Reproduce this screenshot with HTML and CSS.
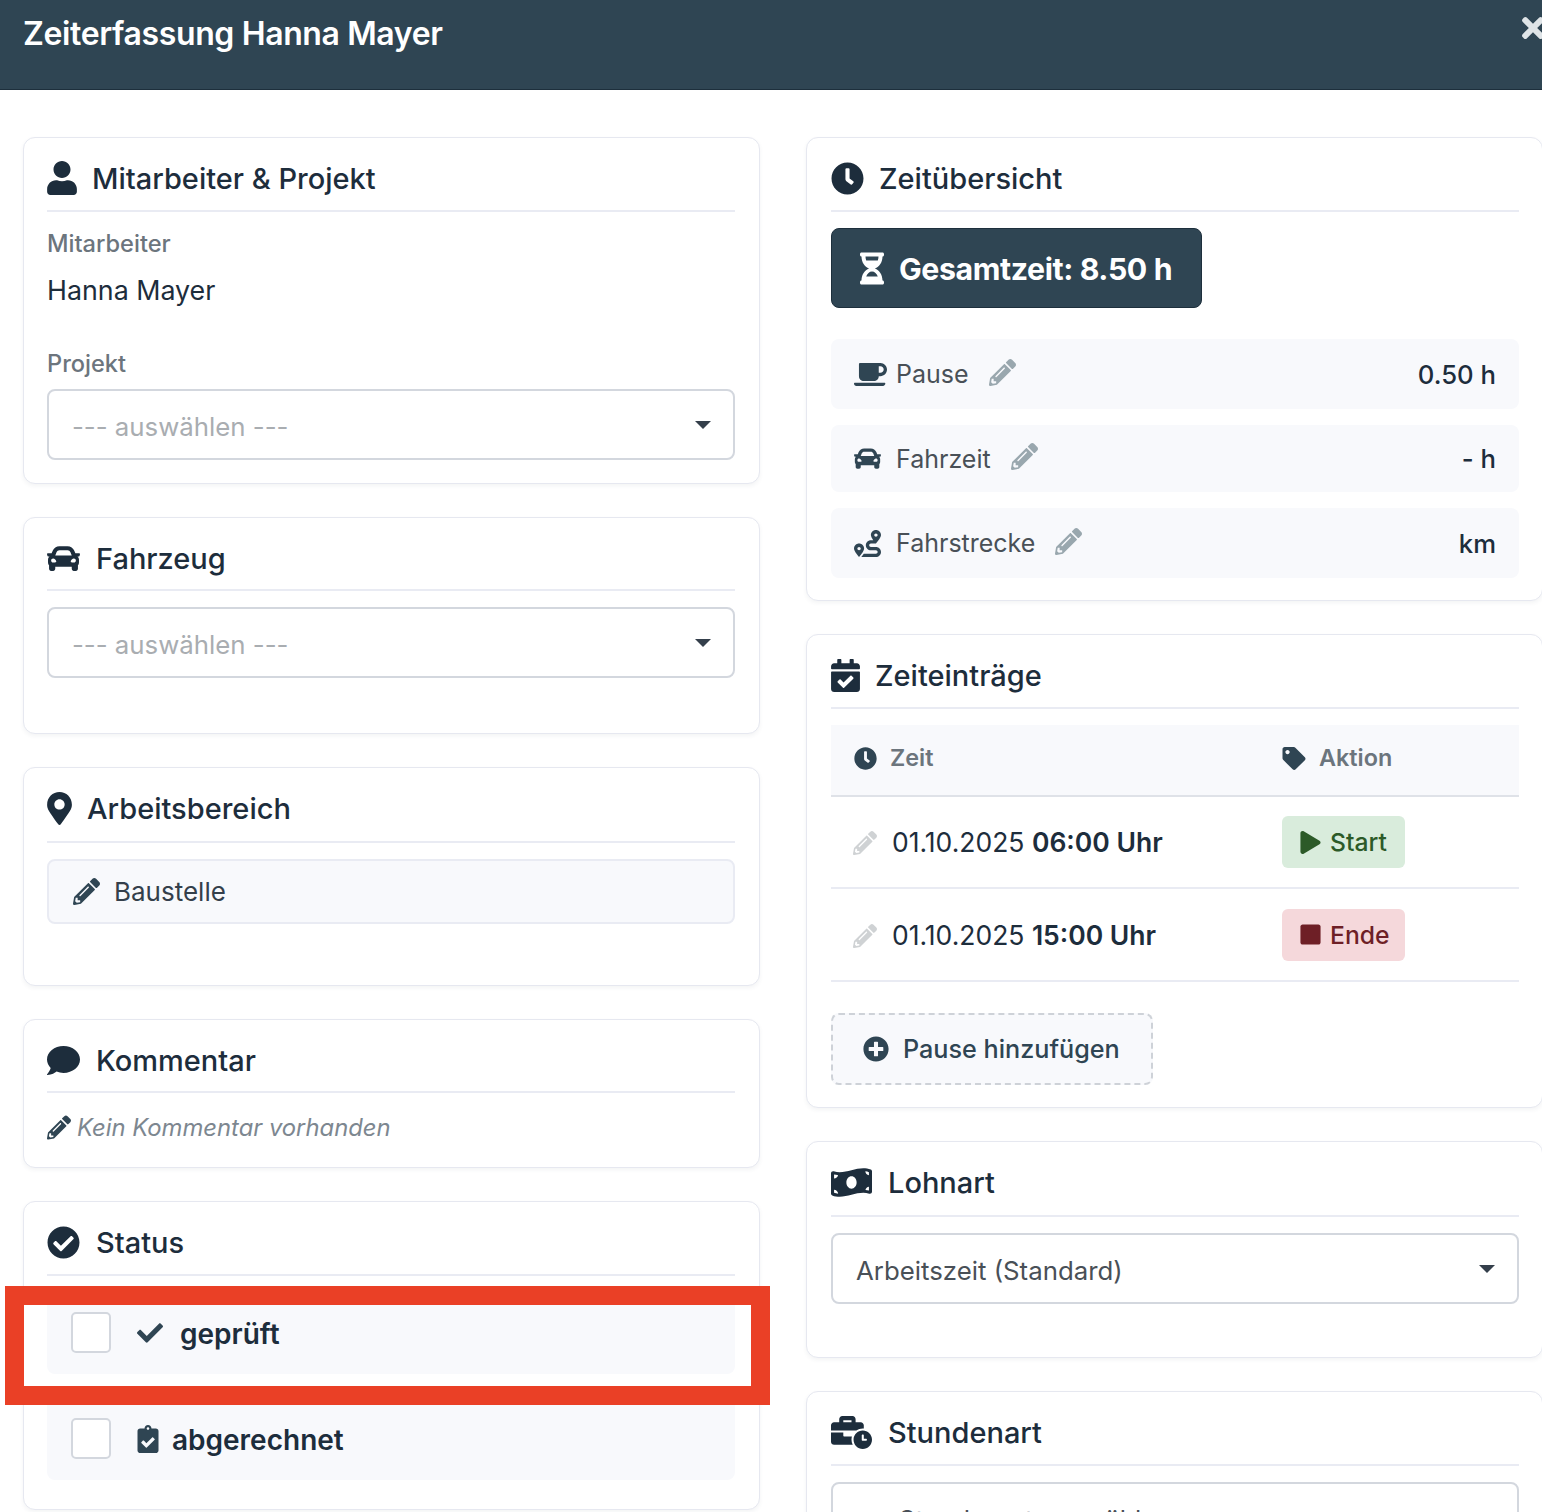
FILE: index.html
```html
<!DOCTYPE html>
<html lang="de">
<head>
<meta charset="utf-8">
<title>Zeiterfassung Hanna Mayer</title>
<link rel="stylesheet" href="styles.css">
</head>
<body>
<svg class="sprite" aria-hidden="true">
  <symbol id="i-user" viewBox="0 0 448 512"><path d="M224 256c70.7 0 128-57.3 128-128S294.7 0 224 0 96 57.3 96 128s57.3 128 128 128zm89.6 32h-16.7c-22.2 10.2-46.9 16-72.9 16s-50.6-5.8-72.9-16h-16.7C60.2 288 0 348.2 0 422.4V464c0 26.5 21.5 48 48 48h352c26.5 0 48-21.5 48-48v-41.6c0-74.2-60.2-134.4-134.4-134.4z"/></symbol>
  <symbol id="i-clock" viewBox="0 0 512 512"><path d="M256,8C119,8,8,119,8,256S119,504,256,504,504,393,504,256,393,8,256,8Zm92.49,313h0l-20,25a16,16,0,0,1-22.49,2.5h0l-67-49.72a40,40,0,0,1-15-31.23V112a16,16,0,0,1,16-16h32a16,16,0,0,1,16,16V256l58,42.5A16,16,0,0,1,348.49,321Z"/></symbol>
  <symbol id="i-car" viewBox="0 0 512 512"><path d="M499.99 176h-59.87l-16.64-41.6C406.38 91.63 365.57 64 319.5 64h-127c-46.06 0-86.88 27.63-103.99 70.4L71.87 176H12.01C4.2 176-1.53 183.34.37 190.91l6 24C7.7 220.25 12.5 224 18.01 224h20.07C24.65 235.73 16 252.78 16 272v48c0 16.12 6.16 30.67 16 41.93V416c0 17.67 14.33 32 32 32h32c17.67 0 32-14.33 32-32v-32h256v32c0 17.67 14.33 32 32 32h32c17.67 0 32-14.33 32-32v-54.07c9.84-11.25 16-25.8 16-41.93v-48c0-19.22-8.65-36.27-22.07-48H494c5.51 0 10.31-3.75 11.64-9.09l6-24c1.89-7.57-3.84-14.91-11.65-14.91zm-352.06-17.83c7.29-18.22 24.94-30.17 44.57-30.17h127c19.63 0 37.28 11.95 44.57 30.17L384 208H128l19.93-49.83zM96 319.8c-19.2 0-32-12.76-32-31.9S76.8 256 96 256s48 28.71 48 47.85-28.8 15.95-48 15.95zm320 0c-19.2 0-48 3.19-48-15.95S396.8 256 416 256s32 12.76 32 31.9-12.8 31.9-32 31.9z"/></symbol>
  <symbol id="i-marker" viewBox="0 0 384 512"><path d="M172.268 501.67C26.97 291.031 0 268.413 0 192 0 85.961 85.961 0 192 0s192 85.961 192 192c0 76.413-26.97 99.031-172.268 309.67-9.535 13.774-29.93 13.773-39.464 0zM192 272c44.183 0 80-35.817 80-80s-35.817-80-80-80-80 35.817-80 80 35.817 80 80 80z"/></symbol>
  <symbol id="i-pencil" viewBox="0 0 512 512"><path d="M497.9 142.1l-46.1 46.1c-4.7 4.7-12.3 4.7-17 0l-111-111c-4.7-4.7-4.7-12.3 0-17l46.1-46.1c18.7-18.7 49.1-18.7 67.9 0l60.1 60.1c18.8 18.7 18.8 49.1 0 67.9zM284.2 99.8L21.6 362.4.4 483.9c-2.9 16.4 11.4 30.6 27.8 27.8l121.5-21.3 262.6-262.6c4.7-4.7 4.7-12.3 0-17l-111-111c-4.8-4.7-12.4-4.7-17.1 0zM124.1 339.9c-5.5-5.5-5.5-14.3 0-19.8l154-154c5.5-5.5 14.3-5.5 19.8 0s5.5 14.3 0 19.8l-154 154c-5.5 5.5-14.3 5.5-19.8 0zM88 424h48v36.3l-64.5 11.3-31.1-31.1L51.7 376H88v48z"/></symbol>
  <symbol id="i-comment" viewBox="0 0 512 512"><path d="M256 32C114.6 32 0 125.1 0 240c0 49.6 21.4 95 57 130.7C44.5 421.1 2.7 466 2.2 466.5c-2.2 2.3-2.8 5.7-1.5 8.7S4.8 480 8 480c66.3 0 116-31.8 140.6-51.4 32.7 12.3 69 19.4 107.4 19.4 141.4 0 256-93.1 256-208S397.4 32 256 32z"/></symbol>
  <symbol id="i-check-circle" viewBox="0 0 512 512"><path d="M504 256c0 136.967-111.033 248-248 248S8 392.967 8 256 119.033 8 256 8s248 111.033 248 248zM227.314 387.314l184-184c6.248-6.248 6.248-16.379 0-22.627l-22.627-22.627c-6.248-6.249-16.379-6.249-22.628 0L216 308.118l-70.059-70.059c-6.248-6.248-16.379-6.248-22.628 0l-22.627 22.627c-6.248 6.248-6.248 16.379 0 22.627l104 104c6.249 6.249 16.379 6.249 22.628.001z"/></symbol>
  <symbol id="i-check" viewBox="0 0 512 512"><path d="M173.898 439.404l-166.4-166.4c-9.997-9.997-9.997-26.206 0-36.204l36.203-36.204c9.997-9.998 26.207-9.998 36.204 0L192 312.69 432.095 72.596c9.997-9.997 26.207-9.997 36.204 0l36.203 36.204c9.997 9.997 9.997 26.206 0 36.204l-294.4 294.401c-9.998 9.997-26.207 9.997-36.204-.001z"/></symbol>
  <symbol id="i-clipboard" viewBox="0 0 384 512"><path d="M336 64h-80c0-35.3-28.7-64-64-64s-64 28.7-64 64H48C21.5 64 0 85.5 0 112v352c0 26.5 21.5 48 48 48h288c26.5 0 48-21.5 48-48V112c0-26.5-21.5-48-48-48zM192 40c13.3 0 24 10.7 24 24s-10.7 24-24 24-24-10.7-24-24 10.7-24 24-24zm121.2 231.8l-143 141.8c-4.7 4.7-12.3 4.6-17-.1l-82.6-83.3c-4.7-4.7-4.6-12.3.1-17L99.1 285c4.7-4.7 12.3-4.6 17 .1l46 46.4 106-105.2c4.7-4.7 12.3-4.6 17 .1l28.2 28.4c4.7 4.8 4.6 12.3-.1 17z"/></symbol>
  <symbol id="i-hourglass" viewBox="0 0 384 512"><path d="M360 0H24C10.745 0 0 10.745 0 24v16c0 13.255 10.745 24 24 24 0 90.965 51.016 167.734 120.842 192C75.016 280.266 24 357.035 24 448c-13.255 0-24 10.745-24 24v16c0 13.255 10.745 24 24 24h336c13.255 0 24-10.745 24-24v-16c0-13.255-10.745-24-24-24 0-90.965-51.016-167.734-120.842-192C308.984 231.734 360 154.965 360 64c13.255 0 24-10.745 24-24V24c0-13.255-10.745-24-24-24zm-75.078 384H99.08c17.059-46.797 52.096-80 92.92-80 40.821 0 75.862 33.196 92.922 80zm.019-256H99.078C91.988 108.548 88 86.748 88 64h208c0 22.805-3.987 44.587-11.059 64z"/></symbol>
  <symbol id="i-coffee" viewBox="0 0 640 512"><path d="M192 384h192c53 0 96-43 96-96h32c70.6 0 128-57.4 128-128S582.6 32 512 32H120c-13.3 0-24 10.7-24 24v232c0 53 43 96 96 96zM512 96c35.3 0 64 28.7 64 64s-28.7 64-64 64h-32V96h32zm47.7 384H48.3c-47.6 0-61-64-36-64h583.3c25 0 11.8 64-35.9 64z"/></symbol>
  <symbol id="i-route" viewBox="0 0 512 512"><path d="M416 320h-96c-17.6 0-32-14.4-32-32s14.4-32 32-32h96s96-107 96-160-43-96-96-96-96 43-96 96c0 25.5 22.2 63.4 45.3 96H320c-52.9 0-96 43.1-96 96s43.1 96 96 96h96c17.6 0 32 14.4 32 32s-14.4 32-32 32H185.5c-16 24.8-33.8 47.7-47.3 64H416c52.9 0 96-43.1 96-96s-43.1-96-96-96zm0-256c17.7 0 32 14.3 32 32s-14.3 32-32 32-32-14.3-32-32 14.3-32 32-32zM96 256c-53 0-96 43-96 96s96 160 96 160 96-107 96-160-43-96-96-96zm0 128c-17.7 0-32-14.3-32-32s14.3-32 32-32 32 14.3 32 32-14.3 32-32 32z"/></symbol>
  <symbol id="i-calendar" viewBox="0 0 448 512"><path d="M436 160H12c-6.627 0-12-5.373-12-12v-36c0-26.51 21.49-48 48-48h48V12c0-6.627 5.373-12 12-12h40c6.627 0 12 5.373 12 12v52h128V12c0-6.627 5.373-12 12-12h40c6.627 0 12 5.373 12 12v52h48c26.51 0 48 21.49 48 48v36c0 6.627-5.373 12-12 12zM12 192h424c6.627 0 12 5.373 12 12v260c0 26.51-21.49 48-48 48H48c-26.51 0-48-21.49-48-48V204c0-6.627 5.373-12 12-12zm333.296 95.947l-28.169-28.398c-4.667-4.705-12.265-4.736-16.97-.068L194.12 364.665l-45.98-46.352c-4.667-4.705-12.266-4.736-16.971-.068l-28.397 28.17c-4.705 4.667-4.736 12.265-.068 16.97l82.601 83.269c4.667 4.705 12.265 4.736 16.97.068l142.953-141.805c4.705-4.667 4.736-12.265.068-16.97z"/></symbol>
  <symbol id="i-tag" viewBox="0 0 512 512"><path d="M0 252.118V48C0 21.49 21.49 0 48 0h204.118a48 48 0 0 1 33.941 14.059l211.882 211.882c18.745 18.745 18.745 49.137 0 67.882L293.823 497.941c-18.745 18.745-49.137 18.745-67.882 0L14.059 286.059A48 48 0 0 1 0 252.118zM112 64c-26.51 0-48 21.49-48 48s21.49 48 48 48 48-21.49 48-48-21.49-48-48-48z"/></symbol>
  <symbol id="i-play" viewBox="0 0 448 512"><path d="M424.4 214.7L72.4 6.6C43.8-10.3 0 6.1 0 47.9V464c0 37.5 40.7 60.1 72.4 41.3l352-208c31.4-18.5 31.5-64.1 0-82.6z"/></symbol>
  <symbol id="i-stop" viewBox="0 0 448 512"><path d="M400 32H48C21.5 32 0 53.5 0 80v352c0 26.5 21.5 48 48 48h352c26.5 0 48-21.5 48-48V80c0-26.5-21.5-48-48-48z"/></symbol>
  <symbol id="i-plus" viewBox="0 0 512 512"><path d="M256 8C119 8 8 119 8 256s111 248 248 248 248-111 248-248S393 8 256 8zm144 276c0 6.6-5.4 12-12 12h-92v92c0 6.6-5.4 12-12 12h-56c-6.6 0-12-5.4-12-12v-92h-92c-6.6 0-12-5.4-12-12v-56c0-6.6 5.4-12 12-12h92v-92c0-6.6 5.4-12 12-12h56c6.6 0 12 5.4 12 12v92h92c6.6 0 12 5.4 12 12v56z"/></symbol>
  <symbol id="i-money" viewBox="0 0 640 512"><path d="M621.16 54.46C582.37 38.19 543.55 32 504.75 32c-123.17-.01-246.33 62.34-369.5 62.34-30.89 0-61.76-3.92-92.65-13.72-3.47-1.1-6.95-1.62-10.35-1.62C15.04 79 0 92.32 0 110.81v317.26c0 12.63 7.23 24.6 18.84 29.46C57.63 473.81 96.45 480 135.25 480c123.17 0 246.34-62.35 369.51-62.35 30.89 0 61.76 3.92 92.65 13.72 3.47 1.1 6.95 1.62 10.35 1.62 17.21 0 32.25-13.32 32.25-31.81V83.93c-.01-12.64-7.24-24.6-18.85-29.47zM48 132.22c20.12 5.04 41.12 7.57 62.72 8.93C104.84 170.54 79 192.69 48 192.69v-60.47zm0 285v-47.78c34.37 0 62.18 27.27 63.71 61.4-22.53-1.81-43.59-6.31-63.71-13.62zM320 352c-44.19 0-80-42.99-80-96 0-53.02 35.82-96 80-96s80 42.98 80 96c0 53.03-35.83 96-80 96zm272 27.78c-17.52-4.39-35.71-6.85-54.32-8.44 5.87-26.08 27.5-45.88 54.32-49.28v57.72zm0-236.11c-30.89-3.91-54.86-29.7-55.81-61.55 19.54 2.17 38.09 6.23 55.81 12.66v48.89z"/></symbol>
  <symbol id="i-business" viewBox="0 0 640 512"><path d="M496 224c-79.59 0-144 64.41-144 144s64.41 144 144 144 144-64.41 144-144-64.41-144-144-144zm64 150.29c0 5.34-4.37 9.71-9.71 9.71h-60.57c-5.34 0-9.71-4.37-9.71-9.71v-76.57c0-5.34 4.37-9.71 9.71-9.71h12.57c5.34 0 9.71 4.37 9.71 9.71V352h38.29c5.34 0 9.71 4.37 9.71 9.71v12.58zM496 192c5.4 0 10.72.33 16 .81V144c0-25.6-22.4-48-48-48h-80V48c0-25.6-22.4-48-48-48H176c-25.6 0-48 22.4-48 48v48H48c-25.6 0-48 22.4-48 48v80h395.12c28.6-20.09 63.35-32 100.88-32zM320 96H192V64h128v32zm6.82 224H208c-8.84 0-16-7.16-16-16v-48H0v144c0 25.6 22.4 48 48 48h291.43C327.1 423.96 320 396.82 320 368c0-16.66 2.48-32.72 6.82-48z"/></symbol>
  <symbol id="i-times" viewBox="0 0 352 512"><path d="M242.72 256l100.07-100.07c12.28-12.28 12.28-32.19 0-44.48l-22.24-22.24c-12.28-12.28-32.19-12.28-44.48 0L176 189.28 75.93 89.21c-12.28-12.28-32.19-12.28-44.48 0L9.21 111.45c-12.28 12.28-12.28 32.19 0 44.48L109.28 256 9.21 356.07c-12.28 12.28-12.28 32.19 0 44.48l22.24 22.24c12.28 12.28 32.2 12.28 44.48 0L176 322.72l100.07 100.07c12.28 12.28 32.2 12.28 44.48 0l22.24-22.24c12.28-12.28 12.28-32.19 0-44.48L242.72 256z"/></symbol>
</svg>

<div class="modal">
  <header class="modal-head">
    <h1 class="modal-title">Zeiterfassung Hanna Mayer</h1>
    <svg class="ic close"><use href="#i-times"/></svg>
  </header>

  <main class="columns">
    <div class="col col-left">
      <section class="card pad-0">
        <h2 class="card-title gap-15"><svg class="ic t-user"><use href="#i-user"/></svg>Mitarbeiter &amp; Projekt</h2>
        <div class="label">Mitarbeiter</div>
        <div class="value">Hanna Mayer</div>
        <div class="label">Projekt</div>
        <div class="select placeholder">--- auswählen ---<span class="caret"></span></div>
      </section>

      <section class="card pad-32">
        <h2 class="card-title short"><svg class="ic t-car"><use href="#i-car"/></svg>Fahrzeug</h2>
        <div class="select placeholder">--- auswählen ---<span class="caret"></span></div>
      </section>

      <section class="card pad-38">
        <h2 class="card-title tall gap-15"><svg class="ic t-marker"><use href="#i-marker"/></svg>Arbeitsbereich</h2>
        <div class="readonly"><svg class="ic ro-pen"><use href="#i-pencil"/></svg>Baustelle</div>
      </section>

      <section class="card pad-0">
        <h2 class="card-title short"><svg class="ic t-comment"><use href="#i-comment"/></svg>Kommentar</h2>
        <p class="note"><svg class="ic note-pen"><use href="#i-pencil"/></svg>Kein Kommentar vorhanden</p>
      </section>

      <section class="card pad-5">
        <h2 class="card-title"><svg class="ic t-check"><use href="#i-check-circle"/></svg>Status</h2>
        <div class="status-list">
          <label class="status"><span class="box"></span><svg class="ic st-check"><use href="#i-check"/></svg><span class="status-text">geprüft</span></label>
          <label class="status"><span class="box"></span><svg class="ic st-clip"><use href="#i-clipboard"/></svg><span class="status-text">abgerechnet</span></label>
        </div>
      </section>
    </div>

    <div class="col col-right">
      <section class="card pad-m1">
        <h2 class="card-title gap-15"><svg class="ic t-clock"><use href="#i-clock"/></svg>Zeitübersicht</h2>
        <div class="total"><svg class="ic total-ic"><use href="#i-hourglass"/></svg><span class="total-text">Gesamtzeit: 8.50 h</span></div>
        <div class="sum-list">
          <div class="sum"><svg class="ic sum-coffee"><use href="#i-coffee"/></svg><span class="sum-name">Pause</span><svg class="ic sum-pen"><use href="#i-pencil"/></svg><b class="sum-val">0.50 h</b></div>
          <div class="sum"><svg class="ic sum-ic"><use href="#i-car"/></svg><span class="sum-name">Fahrzeit</span><svg class="ic sum-pen"><use href="#i-pencil"/></svg><b class="sum-val">- h</b></div>
          <div class="sum"><svg class="ic sum-ic"><use href="#i-route"/></svg><span class="sum-name">Fahrstrecke</span><svg class="ic sum-pen"><use href="#i-pencil"/></svg><b class="sum-val">km</b></div>
        </div>
      </section>

      <section class="card pad-m1">
        <h2 class="card-title gap-15"><svg class="ic t-cal"><use href="#i-calendar"/></svg>Zeiteinträge</h2>
        <table class="entries">
          <thead>
            <tr>
              <th class="c-time"><svg class="ic th-ic"><use href="#i-clock"/></svg>Zeit</th>
              <th class="c-act"><svg class="ic th-ic th-tag"><use href="#i-tag"/></svg>Aktion</th>
            </tr>
          </thead>
          <tbody>
            <tr>
              <td class="c-time"><svg class="ic row-pen"><use href="#i-pencil"/></svg>01.10.2025 <b>06:00 Uhr</b></td>
              <td class="c-act"><span class="badge start"><svg class="ic badge-ic"><use href="#i-play"/></svg>Start</span></td>
            </tr>
            <tr class="row-last">
              <td class="c-time"><svg class="ic row-pen"><use href="#i-pencil"/></svg>01.10.2025 <b>15:00 Uhr</b></td>
              <td class="c-act"><span class="badge end"><svg class="ic badge-ic"><use href="#i-stop"/></svg>Ende</span></td>
            </tr>
          </tbody>
        </table>
        <button class="add" type="button"><svg class="ic add-ic"><use href="#i-plus"/></svg>Pause hinzufügen</button>
      </section>

      <section class="card pad-30">
        <h2 class="card-title tall"><svg class="ic t-money"><use href="#i-money"/></svg>Lohnart</h2>
        <div class="select">Arbeitszeit (Standard)<span class="caret"></span></div>
      </section>

      <section class="card pad-30">
        <h2 class="card-title"><svg class="ic t-money"><use href="#i-business"/></svg>Stundenart</h2>
        <div class="select">--- Stundenart auswählen ---<span class="caret"></span></div>
      </section>
    </div>
  </main>
</div>

<div class="marker-frame"></div>
</body>
</html>
```
FILE: styles.css
```css
* { box-sizing: border-box; }
html, body { margin: 0; height: 1512px; overflow: hidden; background: #fff; }
body { font-family: Inter, "Liberation Sans", sans-serif; color: #2f4553; position: relative; }
.sprite { display: none; }
.ic { fill: currentColor; flex: none; display: inline-block; }

.modal-head { height: 90px; background: #2f4553; border-bottom: 1px solid #1d2f3c; position: relative; padding: 14px 23px 0; }
.modal-title { margin: 0; font-size: 32px; line-height: 40px; font-weight: 600; color: #fff; letter-spacing: -0.38px; }
.close { position: absolute; right: -2px; top: 12px; width: 22px; height: 32px; color: #dfe4e7; }

.columns { display: grid; grid-template-columns: 737px 737px; column-gap: 46px; padding: 47px 0 0 23px; width: 1560px; }
.col { display: flex; flex-direction: column; gap: 33px; }
.col-left .card { padding-left: 23px; }
.col-right .card { padding-right: 23px; }

.card { border: 1px solid #e6e8f0; border-radius: 12px; background: #fff; box-shadow: 0 2px 4px rgba(50, 60, 90, .06); padding: 23px 24px; }
.pad-0 { padding-bottom: 23px; }
.pad-m1 { padding-bottom: 22px; }
.pad-5 { padding-bottom: 29px; }
.pad-30 { padding-bottom: 53px; }
.pad-32 { padding-bottom: 55px; }
.pad-38 { padding-bottom: 61px; }

.card-title { display: flex; align-items: center; gap: 16px; height: 51px; margin: 0 0 16px; padding-bottom: 15px; border-bottom: 2px solid #e9ebf3; font-size: 29px; font-weight: 500; color: #1d2d3c; }
.card-title.short { height: 50px; padding-bottom: 14px; }
.card-title.tall { height: 52px; padding-bottom: 16px; }
.gap-15 { gap: 15px; }
.t-user { width: 30px; height: 34px; }
.t-car { width: 33px; height: 33px; }
.t-marker { width: 25px; height: 33px; }
.t-comment { width: 33px; height: 33px; }
.t-check { width: 33px; height: 33px; }
.t-clock { width: 33px; height: 33px; }
.t-cal { width: 29px; height: 33px; }
.t-money { width: 41px; height: 33px; }

.label { height: 30px; padding-top: 2px; font-size: 23.6px; line-height: 28px; font-weight: 500; color: #6c757d; }
.value { font-size: 26.8px; line-height: 36px; margin: 14px 0 40px; color: #1d2d3c; }
.label + .select { margin-top: 11px; }

.select { position: relative; height: 71px; display: flex; align-items: center; padding: 4px 23px 0; border: 2px solid #d3d7de; border-radius: 8px; font-size: 25.8px; color: #495057; background: #fff; }
.placeholder { color: #a9adb1; }
.caret { position: absolute; right: 22px; top: 30px; width: 0; height: 0; border-left: 8px solid transparent; border-right: 8px solid transparent; border-top: 8px solid #343f4b; }

.readonly { display: flex; align-items: center; gap: 14px; height: 65px; padding: 0 24px; border: 2px solid #e9ebf3; border-radius: 8px; background: #f8f9fc; font-size: 26px; color: #343f4b; }
.ro-pen { width: 27px; height: 27px; color: #2f4553; }

.note { display: flex; align-items: center; gap: 6px; margin: 0; height: 35px; padding-top: 2px; font-size: 23.8px; font-style: italic; color: #7d8790; }
.note-pen { width: 24px; height: 25px; color: #2f4553; }

.status-list { display: flex; flex-direction: column; gap: 23px; margin-top: -1px; }
.status { display: flex; align-items: center; height: 83px; padding: 0 24px; border-radius: 8px; background: #f8f9fc; font-size: 28px; font-weight: 600; color: #1d2d3c; }
.status-text { padding-top: 2px; }
.box { width: 40px; height: 41px; border: 2px solid #d3d7de; border-radius: 5px; background: #fff; margin-right: 26px; }
.st-check { width: 26px; height: 28px; margin-right: 17px; color: #2f4553; }
.st-clip { width: 22px; height: 28px; margin-right: 13px; color: #2f4553; }

.total { display: inline-flex; align-items: center; gap: 15px; width: 371px; height: 80px; padding: 0 28px; border: 1px solid #1d2f3c; border-radius: 8px; background: #2f4553; color: #fff; font-size: 30.3px; font-weight: 700; letter-spacing: -0.4px; white-space: nowrap; vertical-align: top; }
.total-text { padding-top: 2px; }
.total-ic { width: 24px; height: 33px; }

.sum-list { display: flex; flex-direction: column; gap: 16px; margin-top: 31px; }
.sum { display: flex; align-items: center; height: 70px; padding: 0 23px; border-radius: 8px; background: #f8f9fc; font-size: 25px; }
.sum:nth-child(2) { height: 67px; }
.sum-name { color: #495057; margin-left: 9px; }
.sum-coffee { width: 33px; height: 27px; color: #2f4553; }
.sum-ic { width: 27px; height: 27px; margin-right: 6px; color: #2f4553; }
.sum-pen { width: 27px; height: 27px; margin-left: 20px; color: #99a7ae; position: relative; top: -2px; }
.sum-val { margin-left: auto; font-size: 25.7px; font-weight: 500; color: #1d2d3c; }

.entries { width: 688px; border-collapse: collapse; table-layout: fixed; }
.entries th { height: 71px; background: #f8f9fc; border-bottom: 2px solid #dfe2e8; font-size: 23.4px; font-weight: 600; color: #6c757d; text-align: left; padding: 0 0 5px; }
.entries td { height: 92px; border-bottom: 2px solid #e9ebf3; font-size: 26.5px; color: #1d2d3c; padding: 0; }
.entries .row-last td { height: 93px; }
.entries b { font-weight: 600; }
.c-time { width: 451px; }
.entries th.c-time { padding-left: 23px; }
.entries td.c-time { padding-left: 22px; }
.th-ic { width: 23px; height: 23px; margin-right: 13px; vertical-align: -4px; color: #2f4553; }
.th-tag { width: 24px; margin-right: 13px; }
.row-pen { width: 24px; height: 24px; margin-right: 15px; color: #cfd2d4; vertical-align: -3px; }

.badge { display: inline-flex; align-items: center; gap: 9px; width: 123px; height: 52px; padding: 0 18px; border-radius: 6px; font-size: 24.7px; font-weight: 500; }
.badge-ic { width: 21px; height: 23px; }
.start { background: #d9ecdc; color: #2c5a28; }
.end { background: #f5d8db; color: #6e1f26; }

.add { display: flex; align-items: center; gap: 14px; width: 322px; height: 72px; margin-top: 31px; padding: 0 30px; border: 2px dashed #ced2d8; border-radius: 8px; background: #f8f9fc; font: 500 25.2px Inter, "Liberation Sans", sans-serif; color: #2f4553; white-space: nowrap; }
.add-ic { width: 26px; height: 26px; }

.marker-frame { position: absolute; left: 5px; top: 1286px; width: 765px; height: 119px; border: 19px solid #ea4026; }
```
